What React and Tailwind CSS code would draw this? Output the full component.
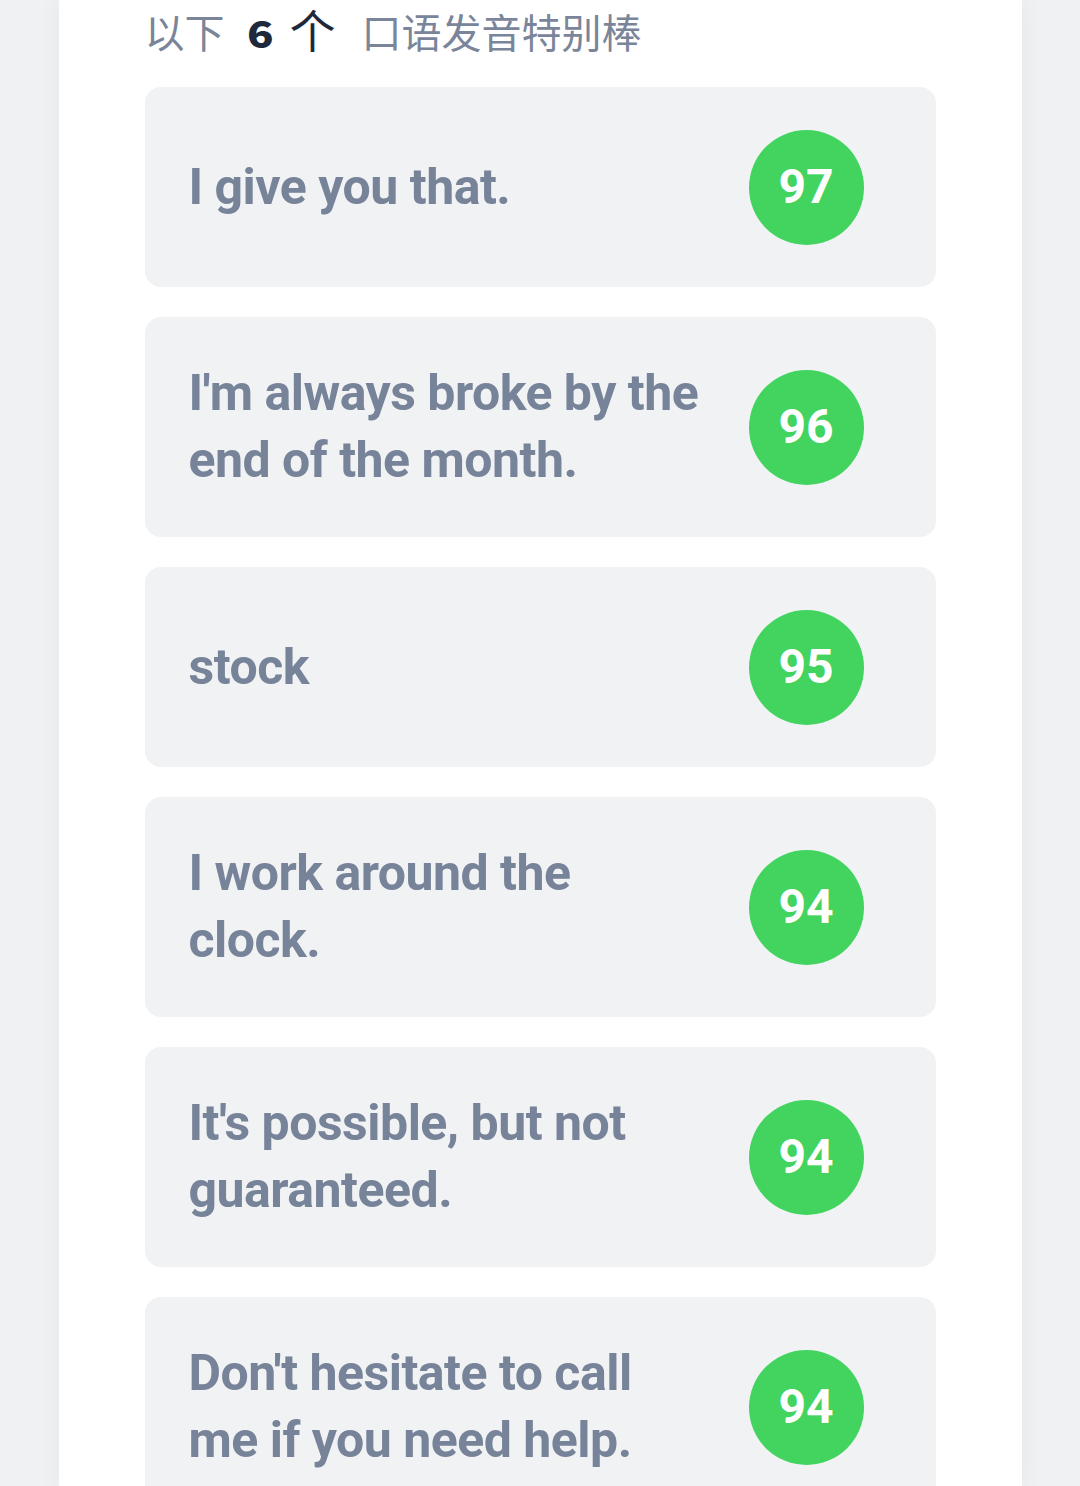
export default function App() {
  const items = [
    { text: "I give you that.", score: 97 },
    { text: "I'm always broke by the end of the month.", score: 96 },
    { text: "stock", score: 95 },
    { text: "I work around the clock.", score: 94 },
    { text: "It's possible, but not guaranteed.", score: 94 },
    { text: "Don't hesitate to call me if you need help.", score: 94 },
  ];
  return (
    <div className="w-[1080px] h-[1486px] overflow-hidden bg-[#f0f1f3] flex justify-center">
      <div className="w-[963px] bg-white px-[86px] shadow-[0_0_24px_rgba(0,0,0,0.05)]" style={{ fontFamily: 'Roboto, "Noto Sans CJK SC", sans-serif' }}>
        <div
          className="h-[59px] mb-[28px] flex items-baseline text-[40px] leading-[52px] text-[#7b8599]"
          style={{ fontFamily: '"Noto Sans CJK SC", sans-serif' }}
        >
          <span>以下</span>
          <span className="ml-[22px] w-[28px] mr-[15px] font-black text-[#1e293b] text-[37px] leading-[52px] inline-block scale-x-[1.18] origin-left">6</span>
          <span className="text-[#1e293b] text-[46px] leading-[56px]">个</span>
          <span className="ml-[26px]">口语发音特别棒</span>
        </div>
        <div className="flex flex-col gap-[30px]">
          {items.map((it, i) => (
            <div key={i} className="min-h-[200px] rounded-[16px] bg-[#f1f2f4] pl-[44px] pr-[72px] flex items-center">
              <div className="w-[514px] py-[43px] text-[50px] leading-[67px] font-bold text-[#778399] tracking-[-0.5px]">{it.text}</div>
              <div className="ml-auto w-[115px] h-[115px] rounded-full bg-[#42d45f] flex items-center justify-center text-white font-bold text-[48px] shrink-0">
                {it.score}
              </div>
            </div>
          ))}
        </div>
      </div>
    </div>
  );
}
